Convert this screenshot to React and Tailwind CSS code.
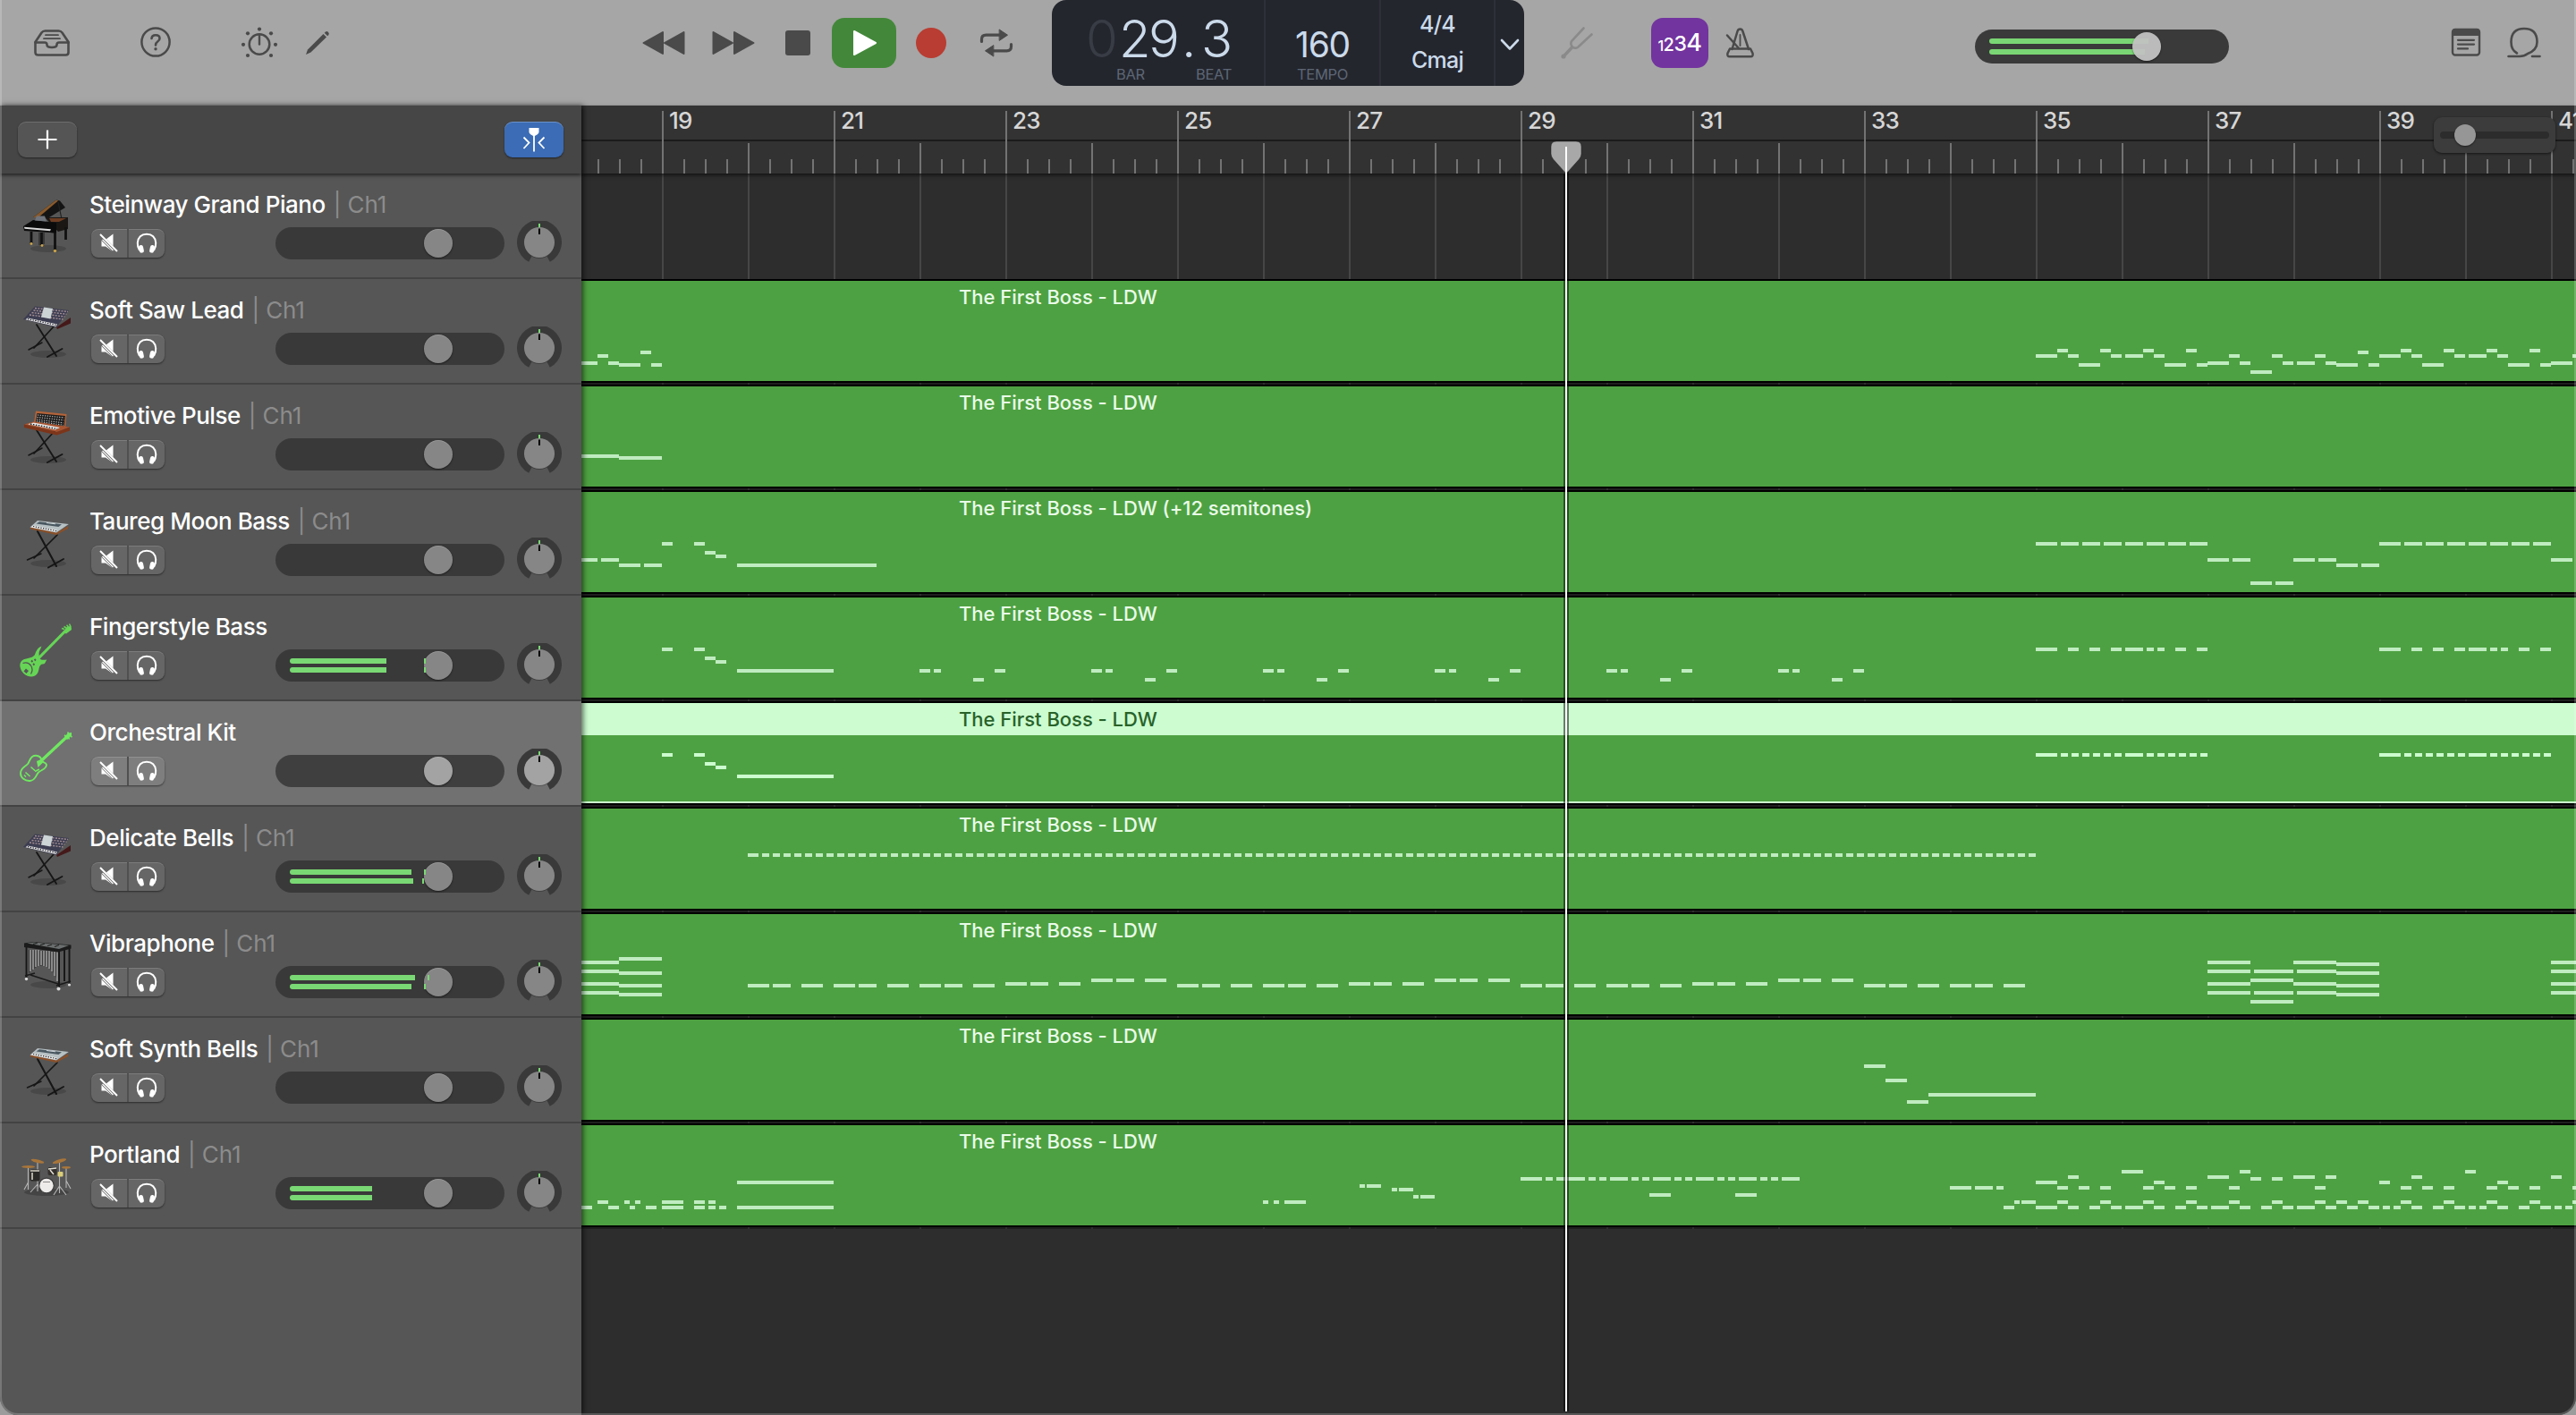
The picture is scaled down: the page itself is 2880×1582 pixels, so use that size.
import React from "react";

/* ---------- toolbar icons ---------- */

const INK = "#4a4a4a";

const LibraryIcon = () => (
  <svg width="40" height="32" viewBox="0 0 40 32" className="ml-[38px] shrink-0" fill="none" stroke={INK} strokeWidth="2.6" strokeLinejoin="round" strokeLinecap="round">
    <path d="M1.5 15 L8.5 4.5 Q10 2.5 12.500 2.500 H27.500 Q30 2.500 31.500 4.500 L38.500 15 V26.500 Q38.500 29.500 35.500 29.500 H4.500 Q1.500 29.500 1.500 26.500 Z" />
    <path d="M1.500 15.500 H12 Q14.500 15.500 14.500 18 Q14.500 21 20 21 Q25.500 21 25.500 18 Q25.500 15.500 28 15.500 H38.500" />
    <path d="M13 7.200 H27 M11 11.200 H29" strokeWidth="1.800" />
  </svg>
);

const HelpIcon = () => (
  <svg width="34" height="34" viewBox="0 0 34 34" className="mb-[2px] ml-[79px] shrink-0" fill="none" stroke={INK}>
    <circle cx="17" cy="17" r="15.600" strokeWidth="2.500" />
    <path d="M12.500 13 Q12.800 9.300 17 9.300 Q21.500 9.300 21.500 13 Q21.500 15 19.200 16.500 Q17 18 17 20.500" strokeWidth="2.600" strokeLinecap="round" />
    <circle cx="17" cy="24.800" r="1.700" fill={INK} stroke="none" />
  </svg>
);

const DialIcon = () => (
  <svg width="42" height="36" viewBox="0 0 42 36" className="ml-[78px] shrink-0" fill="none" stroke={INK}>
    <circle cx="21" cy="19.500" r="11.300" strokeWidth="2.500" />
    <path d="M21 10 V19.500" strokeWidth="2.400" strokeLinecap="round" />
    <g fill={INK} stroke="none">
      <circle cx="21" cy="2.600" r="2.100" />
      <circle cx="8" cy="7.300" r="2.100" />
      <circle cx="34" cy="7.300" r="2.100" />
      <circle cx="3" cy="19.800" r="2.100" />
      <circle cx="39" cy="19.800" r="2.100" />
      <circle cx="8" cy="32" r="2.100" />
      <circle cx="34" cy="32" r="2.100" />
    </g>
  </svg>
);

const PencilIcon = () => (
  <svg width="28" height="28" viewBox="0 0 28 28" className="ml-[30px] shrink-0" fill={INK}>
    <path d="M20.500 4 L24 7.500 L6.500 24.500 L1 27 L3 21.500 Z" />
    <path d="M21.700 2.800 L23.200 1.400 Q24.500 0.400 26 1.900 Q27.500 3.500 26.400 4.900 L25.200 6.200 Z" />
  </svg>
);

const SeekIcon = ({ forward }) => (
  <svg width="48" height="28" viewBox="0 0 48 28" className={forward ? "ml-[30px] shrink-0 -scale-x-100" : "ml-[349px] shrink-0"} fill={INK} stroke={INK} strokeWidth="2" strokeLinejoin="round">
    <path d="M23 2 V26 L1.500 14 Z" />
    <path d="M46.500 2 V26 L25 14 Z" />
  </svg>
);

const CycleIcon = () => (
  <svg width="38" height="32" viewBox="0 0 38 32" className="ml-[37px] shrink-0" fill="none" stroke={INK} strokeWidth="3.200" strokeLinecap="round">
    <path d="M2.500 14.500 V12 Q2.500 7.200 7.500 7.200 H24" />
    <path d="M35.500 17.500 V20 Q35.500 24.800 30.500 24.800 H14" />
    <path d="M22.500 1.200 L31.500 7.200 L22.500 13.200 Z M15.500 18.800 L6.500 24.800 L15.500 30.800 Z" fill={INK} stroke={INK} strokeWidth="1" strokeLinejoin="round" />
  </svg>
);

const TuningForkIcon = () => (
  <svg width="38" height="38" viewBox="0 0 38 38" className="ml-[40px] shrink-0" fill="none" stroke="#8a8a8a" strokeWidth="3" strokeLinecap="round">
    <path d="M26.500 2.500 L13.500 16.500 Q11.500 19 13 22 Q14.800 25.500 18.500 24.500 Q20 24.200 21 23 L35.500 9.500" strokeWidth="2.600" />
    <path d="M13.500 24 L5 33" strokeWidth="3.400" />
    <circle cx="4" cy="34" r="2.600" fill="#8a8a8a" stroke="none" />
  </svg>
);

const MetronomeIcon = () => (
  <svg width="34" height="34" viewBox="0 0 34 34" className="ml-[18px] shrink-0" fill="none" stroke={INK} strokeWidth="2.500" strokeLinejoin="round" strokeLinecap="round">
    <path d="M8.500 24 L14.500 4 Q15.200 1.500 17.500 1.500 Q19.700 1.500 20.400 4 L27 24" />
    <path d="M6 23.500 H29 L31.500 28.500 Q32.500 32.300 29 32.300 H6 Q2.500 32.300 3.500 28.500 Z" />
    <path d="M17.500 8 V20" strokeWidth="1.800" />
    <path d="M3 8.500 L16 23" />
  </svg>
);

const NotepadIcon = () => (
  <svg width="34" height="32" viewBox="0 0 34 32" className="mb-[2px] ml-[248px] shrink-0" fill="none" stroke={INK}>
    <rect x="2" y="2" width="30" height="28.500" rx="3" strokeWidth="2.400" />
    <path d="M1.500 9 V4 Q1.500 1 4.500 1 H29.500 Q32.500 1 32.500 4 V9 Z" fill={INK} stroke="none" />
    <path d="M8 13.800 H26 M8 18.600 H26 M8 23.400 H19" strokeWidth="2.200" strokeLinecap="round" />
  </svg>
);

const LoopBrowserIcon = () => (
  <svg width="40" height="36" viewBox="0 0 40 36" className="ml-[28px] shrink-0" fill="none" stroke={INK} strokeWidth="2.600" strokeLinecap="round">
    <path d="M2.500 33 H15 Q20 33 24 30 Q34.500 26 34.500 17 Q34.500 2 20 2 Q5.500 2 5.500 17 Q5.500 26 12 29.500" />
    <path d="M29 33 H37.500" />
  </svg>
);

/* ---------- instrument pictures ---------- */

const Shadow = ({ cy = 60 }) => <ellipse cx="32" cy={cy} rx="20" ry="4" fill="#000" opacity="0.160" />;

const Stand = () => (
  <g stroke="#161616" strokeLinecap="round" fill="none">
    <path d="M19 27 L41 62" strokeWidth="1.900" />
    <path d="M39 28 L16 53" strokeWidth="1.700" />
    <path d="M10 55 L25 47" strokeWidth="1.500" />
    <path d="M31 63 L47.500 54" strokeWidth="1.900" />
  </g>
);

const Piano = () => (
  <>
    <Shadow />
    <path d="M15 25 L41 5.500 L45 6.500 L51 14 L33 25 Z" fill="#151414" />
    <path d="M15 25 L41 5.500 L43 6.500 L21 25 Z" fill="#8a5a2c" />
    <path d="M43 8 L47 27" stroke="#222" strokeWidth="1.200" />
    <path d="M28 25 L54 25 L54 38 L43 41 Z" fill="#1a1715" />
    <path d="M33 26 L52 26 L44 30 L35 30 Z" fill="#6d3d22" />
    <path d="M4 35 L15 28 L41 31 L41 43 L34 42 L5 40 Z" fill="#0b0b0c" />
    <path d="M19 23.500 L28 23.500 L30 29.500 L17 28.500 Z" fill="#70747c" />
    <path d="M5 35.800 L35 38.300 L34 40.300 L5.500 37.800 Z" fill="#d9d9d9" />
    <path d="M13 41 V54 M24.500 42 V56 M39.500 42 V62 M51.500 36 V50" stroke="#111" strokeWidth="2.800" />
    <path d="M22 42 V56 M27 42 V55" stroke="#1c1c1c" strokeWidth="1" />
    <g fill="#c9a24a">
      <circle cx="13" cy="54.500" r="1.400" />
      <circle cx="25" cy="56.500" r="1.400" />
      <circle cx="39.500" cy="62.500" r="1.700" />
    </g>
  </>
);

const Workstation = () => (
  <>
    <Shadow />
    <Stand />
    <path d="M41 30 L57 19 L57 25.500 L42 32 Z" fill="#45191a" />
    <path d="M17 6.500 L55 11 L41 30 L4 21 Z" fill="#3d3d52" />
    <path d="M17 8.500 L54 12.500 M15.500 11 L52.500 15.200 M13.500 13.500 L50.500 18 M11 16 L48.500 21" stroke="#a38f92" strokeWidth="1.400" strokeDasharray="2 1.300" />
    <path d="M27 7.500 L37 9 L34.500 20.500 L24 18.500 Z" fill="#ccd4d6" />
    <path d="M9 19.500 L42 26.500 L40.500 29 L6.500 21.300 Z" fill="#eaeaea" />
    <path d="M9 20.600 L41 27.500" stroke="#1b1b28" strokeWidth="1.200" strokeDasharray="1.400 1.400" />
  </>
);

const ModularSynth = () => (
  <>
    <Shadow />
    <Stand />
    <path d="M18 5.500 L52.500 9 L51 24 L16 18.500 Z" fill="#b4643a" />
    <path d="M19.500 8 L51 11 L49.700 22.500 L17.800 17.500 Z" fill="#1d1d1d" />
    <path d="M20 10 L50 13 M19.500 12.500 L49.500 15.800 M19 15 L49 18.800 M19 17 L49 21.300" stroke="#c2c2c2" strokeWidth="1.200" strokeDasharray="1.200 1.500" />
    <path d="M5 20.500 L15 17.500 L56 23.500 L41.500 29 Z" fill="#a85430" />
    <path d="M9 20.300 L15.500 18.600 L45 24 L40 26.600 Z" fill="#e8e8e8" />
    <path d="M12 20 L42 25.500" stroke="#151515" strokeWidth="1.300" strokeDasharray="1.500 1.500" />
    <path d="M5 20.500 L41.500 29 L56 23.500 V27.500 L41.500 32.500 L5 24 Z" fill="#7d3519" />
  </>
);

const Keyboard = () => (
  <>
    <Shadow cy={58} />
    <g stroke="#161616" strokeLinecap="round">
      <path d="M20 22 L41 61" strokeWidth="2.100" />
      <path d="M42 26 L16 52" strokeWidth="1.700" />
      <path d="M8.500 54 L24 47" strokeWidth="1.500" />
      <path d="M32 62.500 L49 53" strokeWidth="2" />
    </g>
    <path d="M12 17 L41 23.500 L54.500 16 L54 19 L41 26 L12 19.500 Z" fill="#8a5029" />
    <path d="M20 10 L54.800 14 L41 23.500 L11.500 17.500 Z" fill="#b7c0c3" />
    <path d="M22 11.200 L47 14.300 L43.500 17 L18.500 13.500 Z" fill="#4a5861" />
    <path d="M30 12.500 L40 13.800" stroke="#cfd8dc" strokeWidth="1" />
    <path d="M15.500 15.500 L42 20.500 L39.500 22.500 L13 17.500 Z" fill="#f0f0f0" />
    <path d="M15 16.500 L41 21.500" stroke="#222" strokeWidth="1.200" strokeDasharray="1.400 1.400" />
  </>
);

const BassGuitar = () => (
  <>
    <path d="M21 46 L51 15.500" stroke="#66d556" strokeWidth="3.200" />
    <path d="M48 17 L53 10.500 L57.500 10 L58 14 L52 18.500 Z" fill="#66d556" />
    <path d="M47 12.500 l3 1 M49.500 10.500 l2.500 1.500 M52.500 8.800 l2 2 M55.500 7.500 l1.500 3" stroke="#66d556" strokeWidth="1.500" />
    <path d="M24.500 32.500 C20 34 18.500 38 17.300 41 C15.500 46 9 45.500 4.500 47.300 C1 49 0 52 0.500 55.500 C1.500 62 7.500 66.500 13 66.500 C18.500 66.500 20.500 62.500 21.300 59 C22 55 23 52.500 26 52.500 C29 52.500 28.500 49.500 30.500 47.500 C27.500 47.500 24.500 48.500 22.500 46.500 C21 44 22 42.500 21.500 40.500 C21.500 37.500 23.500 36 24.500 32.500 Z" fill="#66d556" />
    <path d="M3.500 51.500 Q9 49.500 12.500 54 Q15.500 58.500 12.500 63.500" stroke="#565656" strokeWidth="1.300" fill="none" />
    <path d="M13 48.500 l1.500 1.500 M16.500 47 l1.500 1.500 M15 52 l1.500 1.500" stroke="#565656" strokeWidth="1.800" />
    <path d="M7 57.500 l3 2.500 -2.500 3 -3 -2.500 Z" fill="#565656" />
  </>
);

const ViolinBass = () => (
  <>
    <path d="M22 44.500 L52 16.500" stroke="#70e860" strokeWidth="3.200" />
    <path d="M50 16 L54 11.500 L58 11 L58 14.500 L53 19 Z" fill="#70e860" />
    <path d="M50 14 l2.500 1.500 M53.500 10.500 l1.500 2 M55.500 18.500 l-1 -2 M58.500 16 l-1.500 -1" stroke="#70e860" strokeWidth="1.600" />
    <path d="M16 37 C12 38 11.500 42 9.500 45.500 C7 49 1 50 1 56.500 C1 61.500 6 65.500 11.500 65 C18 64.500 18 58.500 21 55.500 C24 52.500 30 52 30 47 C29.500 44.500 27.500 45 25.500 43.500 C24 38.500 20.500 36 16 37 Z" fill="none" stroke="#70e860" strokeWidth="1.900" />
    <path d="M19 43 L24 41 L27 43.500 L20.500 50 Z" fill="#70e860" />
    <path d="M12.500 49.500 l4.500 4 M6.500 55.500 l5 4.500 M5 58.500 l2 2 M17 54.500 l5 -2.500" stroke="#70e860" strokeWidth="1.600" />
  </>
);

const Vibes = () => (
  <>
    <Shadow cy={57} />
    <path d="M10 18 L43 20 V55 Q36 32 20 36 L10 44 Z" fill="#3c3c3c" />
    <path d="M12 18 V42 M15 18 V40 M18 18 V37 M21 18 V36 M24 19 V35 M27 19 V36 M30 19 V37 M33 19 V39 M36 20 V42 M39 20 V47 M42 20 V53" stroke="#a2a2a2" strokeWidth="1.500" />
    <path d="M7.500 15 V49 M44 20 V60 M55.500 15 V57 M50 17 V53" stroke="#161616" strokeWidth="1.900" />
    <path d="M6 47 L17 44 M41 58 L57 53 M12 46 L43 56" stroke="#1a1a1a" strokeWidth="1.500" />
    <path d="M5 10.500 L15 9 L57.500 12.500 L57.500 16.500 L43 20.500 L5 15 Z" fill="#1b1b1b" />
    <path d="M8 10.500 L16 9.600 L55 13 L44 17 Z" fill="#6c6f6f" />
    <path d="M20 10 l-5 1.500 M28 11 l-5 1.500 M36 12 l-5 1.500 M44 12.500 l-5 2" stroke="#222" strokeWidth="1.300" />
    <g fill="#d8d8d8">
      <circle cx="7.500" cy="50.500" r="1.700" />
      <circle cx="43.500" cy="61.500" r="2" />
      <circle cx="55.500" cy="57" r="1.600" />
    </g>
  </>
);

const DrumKit = () => (
  <>
    <ellipse cx="30" cy="53" rx="25" ry="4" fill="#000" opacity="0.200" />
    <path d="M20 18 V52 M44.500 18 V54 M9.500 24 V50 M52 25 V48 M20 44 L12 53 M20 44 L26 53 M44.500 46 L38 56 M44.500 46 L52 56 M9.500 42 L5 50 M52 40 L57 49" stroke="#b7b7b7" strokeWidth="1.100" />
    <rect x="11.500" y="27.500" width="11" height="13" rx="2" fill="#2b2927" />
    <path d="M12 29 H22 M14 31 V39" stroke="#d5d0c4" strokeWidth="1.600" />
    <rect x="31.500" y="25" width="10" height="9" rx="2" fill="#33302d" />
    <path d="M32 27 L41 26 M34 28 L38 33" stroke="#e4e0d5" strokeWidth="1.500" />
    <rect x="42.500" y="30" width="6" height="5.500" rx="1" fill="#d9cd7a" />
    <circle cx="30" cy="45.300" r="8.800" fill="#3a3a3a" />
    <circle cx="30" cy="45.500" r="7.700" fill="#eeecea" />
    <path d="M26 41.500 H34" stroke="#8b8b8b" strokeWidth="1" />
    <g fill="#a9763a">
      <ellipse cx="9.600" cy="24.500" rx="7.500" ry="1.500" />
      <ellipse cx="20" cy="18.200" rx="7.500" ry="1.800" transform="rotate(14 20 18.200)" />
      <ellipse cx="44.500" cy="18.200" rx="8" ry="1.900" transform="rotate(-16 44.500 18.200)" />
      <ellipse cx="52" cy="25.300" rx="5" ry="1.400" />
    </g>
  </>
);

/* ---------- note data: [x, y, width] in arrange-area pixels ---------- */

const at = (y, w, ...xs) => xs.map((x) => [x, y, w]);
const shift = (notes, dx) => notes.map(([x, y, w]) => [x + dx, y, w]);

const sawPhrase = [
  [2276, 84, 24], [2300, 78, 12], [2312, 84, 12], [2324, 94, 24], [2348, 78, 12], [2360, 84, 12],
  [2376, 84, 20], [2396, 78, 12], [2408, 84, 12], [2420, 94, 24], [2444, 78, 12], [2456, 94, 12],
];
const sawNotes = [
  [650, 92, 18], [668, 84, 12], [680, 92, 12], [692, 94, 24], [716, 80, 12], [728, 94, 12],
  ...sawPhrase,
  [2468, 92, 24], [2492, 84, 12], [2504, 92, 12], [2516, 102, 24], [2540, 84, 12], [2552, 92, 12],
  [2568, 92, 20], [2588, 84, 12], [2600, 92, 12], [2612, 94, 24], [2636, 80, 12], [2648, 94, 12],
  ...shift(sawPhrase, 384),
  [2852, 92, 24], [2876, 84, 4],
];

const pulseNotes = [[650, 78, 42], [692, 80, 48]];

const moonPhrase = [[2276, 58, 24], ...at(58, 20, 2304, 2328, 2352, 2376, 2400, 2424, 2448)];
const moonNotes = [
  [650, 76, 18], [672, 76, 20], [692, 82, 24], [720, 82, 20],
  [740, 58, 12], [776, 58, 12], [788, 68, 12], [800, 72, 12], [824, 82, 156],
  ...moonPhrase,
  [2468, 76, 24], [2496, 76, 20], [2516, 102, 24], [2544, 102, 20],
  [2564, 76, 24], [2592, 76, 20], [2612, 82, 24], [2640, 82, 20],
  ...shift(moonPhrase, 384),
  [2852, 76, 24],
];

const bassIntro = [[740, 58, 12], [776, 58, 12], [788, 68, 12], [800, 72, 12], [824, 82, 108]];
const bassPhrase = [[2276, 58, 24], ...at(58, 12, 2312, 2336, 2360), [2376, 58, 20], ...at(58, 8, 2400, 2412), ...at(58, 12, 2432, 2456)];
const bassNotes = [
  ...bassIntro,
  ...[1028, 1220, 1412, 1604, 1796, 1988].flatMap((x) => [[x, 82, 12], [x + 16, 82, 8], [x + 60, 92, 12], [x + 84, 82, 12]]),
  ...bassPhrase,
  ...shift(bassPhrase, 384),
];

const kitPhrase = [
  [2276, 58, 24], ...at(58, 8, 2304, 2316, 2328, 2340, 2352, 2364),
  [2376, 58, 20], ...at(58, 8, 2400, 2412, 2424, 2436, 2448, 2460),
];
const kitNotes = [...bassIntro, ...kitPhrase, ...shift(kitPhrase, 384)];

const bellNotes = [[836, 52, 12], ...Array.from({ length: 119 }, (_, i) => [852 + i * 12, 52, 8])];

const vibeNotes = [
  ...[54, 64, 78, 88].map((y) => [650, y, 42]),
  ...[50, 66, 80, 90].map((y) => [692, y, 48]),
  ...[80, 80, 80, 78, 74, 80, 80, 78, 74, 80, 80, 78, 74, 80, 80].flatMap((y, i) => {
    const x = 836 + i * 96;
    return [[x, y, 24], [x + 28, y, 20], [x + 60, y, 24]];
  }),
  ...[54, 64, 78, 88].map((y) => [2468, y, 48]),
  [2520, 64, 44], [2516, 74, 48], [2520, 88, 44], [2516, 98, 48],
  [2564, 54, 48], [2568, 64, 44], [2564, 78, 48], [2568, 88, 44],
  ...[56, 66, 80, 90].map((y) => [2612, y, 48]),
  ...[54, 64, 78, 88].map((y) => [2852, y, 28]),
];

const synthBellNotes = [[2084, 52, 24], [2108, 68, 24], [2132, 92, 24], [2156, 84, 120]];

const drumNotes = [
  ...at(92, 12, 650, 680, 722, 776), ...at(86, 12, 668, 776), ...at(86, 6, 698, 710), [704, 92, 6],
  [740, 86, 24], [740, 92, 24], [792, 86, 8], [792, 92, 8], [804, 92, 8], [824, 64, 108], [824, 92, 108],
  ...at(86, 6, 1412, 1424), [1436, 86, 24],
  [1520, 68, 6], [1528, 68, 16], [1556, 72, 6], [1564, 72, 16], [1580, 80, 6], [1588, 80, 16],
  [1700, 60, 24], [1740, 60, 32], ...at(60, 20, 1800, 1848, 1896, 1944, 1992),
  ...at(60, 8, 1728, 1776, 1788, 1824, 1836, 1872, 1884, 1920, 1932, 1968, 1980),
  [1844, 78, 24], [1940, 78, 24],
  [2180, 70, 24], [2208, 70, 20], [2232, 70, 8], [2240, 92, 12], [2252, 86, 6], [2260, 86, 16],
  [2276, 64, 24], ...at(64, 12, 2408, 2660, 2792),
  ...at(58, 12, 2312, 2600, 2696, 2852), ...at(58, 24, 2468, 2564),
  [2372, 52, 24], ...at(52, 12, 2504, 2756), ...at(60, 12, 2516, 2540),
  ...at(70, 12, 2300, 2324, 2348, 2396, 2420, 2444, 2492, 2588, 2684, 2708, 2732, 2780, 2804, 2828, 2876),
  ...at(86, 12, 2300, 2348, 2396, 2444, 2492, 2540, 2588, 2612, 2636, 2684, 2732, 2780, 2828, 2876),
  ...at(92, 12, 2312, 2336, 2360, 2408, 2432, 2456, 2504, 2528, 2552, 2600, 2624, 2648, 2696, 2720, 2744, 2792, 2816, 2840),
  [2276, 92, 24], ...at(92, 20, 2376, 2472, 2568), ...at(92, 8, 2664, 2676, 2760, 2772, 2856, 2868),
];

const REGION = "The First Boss - LDW";

const tracks = [
  { name: "Steinway Grand Piano", ch: true, Icon: Piano },
  { name: "Soft Saw Lead", ch: true, Icon: Workstation, region: REGION, notes: sawNotes },
  { name: "Emotive Pulse", ch: true, Icon: ModularSynth, region: REGION, notes: pulseNotes },
  { name: "Taureg Moon Bass", ch: true, Icon: Keyboard, region: REGION + " (+12 semitones)", notes: moonNotes },
  { name: "Fingerstyle Bass", Icon: BassGuitar, region: REGION, notes: bassNotes, meter: [108, 108], peaks: [150, 150] },
  { name: "Orchestral Kit", Icon: ViolinBass, region: REGION, notes: kitNotes, selected: true },
  { name: "Delicate Bells", ch: true, Icon: Workstation, region: REGION, notes: bellNotes, meter: [136, 138], peaks: [150, 148] },
  { name: "Vibraphone", ch: true, Icon: Vibes, region: REGION, notes: vibeNotes, meter: [140, 136], peaks: [154, 150] },
  { name: "Soft Synth Bells", ch: true, Icon: Keyboard, region: REGION, notes: synthBellNotes },
  { name: "Portland", ch: true, Icon: DrumKit, region: REGION, notes: drumNotes, meter: [92, 92] },
];

/* ---------- track header ---------- */

const MuteIcon = ({ selected }) => (
  <svg width="24" height="24" viewBox="0 0 24 24" fill="#fff">
    <path d="M3.500 8 H8 L16.500 1.500 V21.500 L8 15.500 H3.500 Z" />
    <path d="M1.500 3.500 L20.500 22.500" stroke={selected ? "#7e7e7e" : "#666666"} strokeWidth="5" />
    <path d="M2 2 L21 21 " stroke="#fff" strokeWidth="2" />
    <path d="M4.500 8 L16.500 20" stroke="#fff" strokeWidth="1.200" />
  </svg>
);

const SoloIcon = () => (
  <svg width="24" height="24" viewBox="0 0 24 24" fill="none" stroke="#fff">
    <path d="M4 20 Q1.500 16 1.800 11.500 Q2.800 1.800 12 1.800 Q21.200 1.800 22.200 11.500 Q22.500 16 20 20" strokeWidth="2" />
    <rect x="3.400" y="14" width="5" height="8.600" rx="2.400" fill="#fff" stroke="none" transform="rotate(-12 6 18)" />
    <rect x="15.600" y="14" width="5" height="8.600" rx="2.400" fill="#fff" stroke="none" transform="rotate(12 18 18)" />
  </svg>
);

const PanKnob = ({ selected }) => (
  <svg width="50" height="50" viewBox="0 0 50 50" className="ml-[14px] shrink-0">
    <path d="M13.200 45.800 A25 25 0 1 1 36.800 45.800 L33.500 39.500 A17 17 0 1 0 16.500 39.500 Z" fill="#393939" />
    <path d="M25 3 V8" stroke="#79d873" strokeWidth="2" />
    <circle cx="25" cy="25" r="17" fill="#000" opacity="0.250" />
    <circle cx="25" cy="24" r="17" fill={selected ? "#a3a3a3" : "#868686"} />
    <path d="M25 8.500 V15" stroke="#000" strokeWidth="2" />
  </svg>
);

const VolumeSlider = ({ meter, peaks, selected }) => (
  <div className={`relative ml-[124px] h-9 w-64 shrink-0 rounded-full ${selected ? "bg-[#3f3f3f]" : "bg-[#393939]"}`}>
    {meter && (
      <div className="flex flex-col gap-1 pt-[10px] pl-4">
        {meter.map((w, i) => (
          <div key={i} className="h-1.5 rounded-l-[3px] bg-[#79d873]" style={{ width: w }} />
        ))}
      </div>
    )}
    <div className={`absolute top-[2px] left-[166px] size-8 rounded-full shadow-[0_1px_2px_rgba(0,0,0,0.5),inset_0_1px_0_rgba(255,255,255,0.15)] ${selected ? "bg-[#a3a3a3]" : "bg-[#868686]"}`} />
    {peaks && (
      <div className="absolute top-[10px] left-4 flex flex-col gap-1">
        {peaks.map((x, i) => (
          <div key={i} className="h-1.5 w-[2px] bg-[#79d873]" style={{ marginLeft: x }} />
        ))}
      </div>
    )}
  </div>
);

const TrackHeader = ({ track }) => {
  const { name, ch, Icon, selected } = track;
  return (
    <div className={`flex h-[118px] shrink-0 border-b-2 border-[#434343] ${selected ? "bg-[#717171]" : "bg-[#565656]"}`}>
      <svg width="60" height="70" viewBox="0 0 60 70" className="mt-6 ml-[22px] shrink-0">
        <Icon />
      </svg>
      <div className="ml-[18px] pt-[19px]">
        <div className="h-8 text-[26px] leading-8 font-medium tracking-[-0.45px] whitespace-nowrap text-white">
          {name}
          {ch && <span className="ml-[9px] font-normal tracking-[-0.1px] text-[#8c8c8c]">| Ch1</span>}
        </div>
        <div className="mt-[2px] ml-[2px] flex h-[50px] items-center">
          <div className={`flex h-8 w-[82px] shrink-0 rounded-[8px] shadow-[0_1px_2px_rgba(0,0,0,0.5),inset_0_1px_0_rgba(255,255,255,0.15)] ${selected ? "bg-[#7e7e7e]" : "bg-[#666666]"}`}>
            <div className="flex w-[42px] items-center justify-center border-r-2 border-[#505050]"><MuteIcon selected={selected} /></div>
            <div className="flex w-10 items-center justify-center"><SoloIcon /></div>
          </div>
          <VolumeSlider {...track} />
          <PanKnob selected={selected} />
        </div>
      </div>
    </div>
  );
};

/* ---------- arrange area ---------- */

const Region = ({ region, notes, selected }) => (
  <div className="relative h-[116px] overflow-hidden border-y-2 border-black bg-[#4ea142]">
    <div className={`h-9 pt-[6px] pl-[422px] text-[22px] leading-6 font-medium tracking-[-0.02px] whitespace-nowrap ${selected ? "bg-[#ccfccf] text-[#28622a]" : "text-[#e9fbe8]"}`}>{region}</div>
    <svg width="2230" height="112" viewBox="650 2 2230 112" className="absolute top-0 left-0" fill={selected ? "#ccfccf" : "#c0ecc1"} shapeRendering="crispEdges">
      {notes.map(([x, y, w], i) => (
        <rect key={i} x={x} y={y} width={w} height="4" />
      ))}
      {selected && <rect x="650" y="112" width="2230" height="2" />}
    </svg>
  </div>
);

const Ticks = ({ first }) =>
  (first ? [1, 2, 3] : [0, 1, 2, 3, 4, 5, 6, 7]).map((i) => (
    <div key={i} className="flex h-full w-6 shrink-0 items-end">
      {i > 0 && <div className={`w-[2px] bg-[#737373] ${i === 4 ? "h-[34px]" : "h-4"}`} />}
    </div>
  ));

const Ruler = () => (
  <div className="relative flex h-[76px] shrink-0 overflow-hidden bg-[linear-gradient(to_bottom,#333333_38px,#1b1b1b_38px,#1b1b1b_40px,#323232_40px)] pt-1.5">
    <div className="flex w-[90px] shrink-0 items-end pl-[18px]"><Ticks first /></div>
    {[19, 21, 23, 25, 27, 29, 31, 33, 35, 37, 39, 41].map((n) => (
      <div key={n} className="flex w-48 shrink-0 flex-col justify-between border-l-2 border-[#737373]">
        <div className="pl-[6px] text-[26px] leading-[22px] font-medium tracking-[-0.7px] text-[#d6d6d6]">{n}</div>
        <div className="-ml-[2px] flex h-[34px]"><Ticks /></div>
      </div>
    ))}
    <div className="absolute top-[13px] left-[2071px] flex h-10 w-[136px] items-center rounded-[9px] bg-[#3c3c3c] px-[7px] shadow-[0_1px_3px_rgba(0,0,0,0.6)]">
      <div className="flex h-2 w-full items-center rounded-full bg-[#2c2c2c] pl-4">
        <div className="size-6 shrink-0 rounded-full bg-[#969696] shadow-[0_1px_2px_rgba(0,0,0,0.5)]" />
      </div>
    </div>
  </div>
);

const Playhead = () => (
  <svg width="38" height="1424" viewBox="0 0 38 1424" className="absolute top-[38px] left-[1082px]">
    <path d="M17 36 V1422 M21 36 V1422" stroke="#000" strokeOpacity="0.500" strokeWidth="2" />
    <path d="M8 2 H30 Q36 2 36 8 V16 Q36 19 33.500 22 L21 36 Q19 38 17 36 L4.500 22 Q2 19 2 16 V8 Q2 2 8 2 Z" fill="#a8a8a8" stroke="#222" strokeOpacity="0.500" strokeWidth="1" />
    <path d="M19 8 V1422" stroke="#fff" strokeWidth="2" />
  </svg>
);

/* ---------- display ---------- */

const Display = () => (
  <div className="ml-[43px] flex h-24 w-[528px] shrink-0 rounded-[16px] bg-[#24262e] text-[#cbdaea]">
    <div className="flex w-[239px] flex-col border-r-2 border-[#2d3038] pt-[12px] pl-[38px]">
      <div className="flex h-[62px] items-center text-[58px] leading-[62px] font-light">
        <span className="w-[37px] text-[#383c45]">0</span>
        <span className="w-[70px] tracking-[-2.5px]">29</span>
        <span className="w-[22px]">.</span>
        <span>3</span>
      </div>
      <div className="flex pl-[34px] text-[16.5px] leading-[18px] tracking-[-0.3px] text-[#5d6675]">
        <span className="w-[89px]">BAR</span>
        <span>BEAT</span>
      </div>
    </div>
    <div className="flex w-[129px] flex-col items-center border-r-2 border-[#2d3038] pt-[26px]">
      <div className="h-12 text-[39px] leading-[48px] tracking-[-1.2px]">160</div>
      <div className="text-[16.5px] leading-[18px] tracking-[-0.3px] text-[#5d6675]">TEMPO</div>
    </div>
    <div className="flex w-[128px] flex-col items-center gap-2 border-r-2 border-[#2d3038] pt-[11px] text-[25px] leading-8 font-medium tracking-[-0.7px]">
      <div>4/4</div>
      <div>Cmaj</div>
    </div>
    <div className="flex flex-1 items-center justify-center pt-1">
      <svg width="22" height="14" viewBox="0 0 22 14" fill="none" stroke="#cbdaea" strokeWidth="2.600" strokeLinecap="round" strokeLinejoin="round">
        <path d="M2 2 L11 11.500 L20 2" />
      </svg>
    </div>
  </div>
);

const Toolbar = () => (
  <div className="h-[118px] shrink-0 bg-[#a6a6a6]">
    <div className="flex h-24 items-center">
      <LibraryIcon />
      <HelpIcon />
      <DialIcon />
      <PencilIcon />
      <SeekIcon />
      <SeekIcon forward />
      <div className="ml-[34px] size-7 shrink-0 rounded-[3px] bg-[#4a4a4a]" />
      <div className="ml-6 flex h-14 w-[72px] shrink-0 items-center justify-center rounded-[14px] bg-[#43883a] pl-[2px]">
        <svg width="28" height="30" viewBox="0 0 28 30" fill="#fff" stroke="#fff" strokeWidth="2" strokeLinejoin="round">
          <path d="M2 2 L26 15 L2 28 Z" />
        </svg>
      </div>
      <div className="ml-[22px] size-[34px] shrink-0 rounded-full bg-[#b93d32]" />
      <CycleIcon />
      <Display />
      <TuningForkIcon />
      <div className="ml-[64px] flex h-14 w-16 shrink-0 items-baseline justify-center rounded-[13px] bg-[#72349e] pt-[10px] leading-9 font-medium tracking-[-0.5px] text-white">
        <span className="text-[16px]">1</span>
        <span className="text-[20px]">2</span>
        <span className="text-[23px]">3</span>
        <span className="text-[27px]">4</span>
      </div>
      <MetronomeIcon />
      <div className="relative mt-2 ml-[246px] h-[38px] w-[284px] shrink-0 rounded-full bg-[#3a3a3a]">
        <div className="flex flex-col gap-1.5 pt-[10px] pl-4">
          <div className="h-1.5 w-[178px] rounded-l-full bg-[#7ad674]" />
          <div className="h-1.5 w-[174px] rounded-l-full bg-[#7ad674]" />
        </div>
        <div className="absolute top-[3px] left-[176px] size-8 rounded-full bg-[#c2c2c2]/95 shadow-[0_1px_2px_rgba(0,0,0,0.5)]" />
      </div>
      <NotepadIcon />
      <LoopBrowserIcon />
    </div>
  </div>
);

export default function App() {
  return (
    <div className="h-[1582px] w-[2880px] overflow-hidden bg-[#9c9c9c] font-['Inter',sans-serif]">
      <div className="relative flex h-full flex-col overflow-hidden rounded-b-[20px]">
        <Toolbar />
        <div className="flex min-h-0 flex-1">
          <div className="relative z-10 flex w-[650px] shrink-0 flex-col bg-[#565656] shadow-[2px_0_6px_rgba(0,0,0,0.6)]">
            <div className="relative z-10 flex h-[76px] shrink-0 items-center justify-between bg-[#464646] pr-5 pl-5 shadow-[0_2px_4px_rgba(0,0,0,0.6)]">
              <div className="flex h-10 w-[66px] items-center justify-center rounded-[9px] bg-[#555555] shadow-[0_1px_2px_rgba(0,0,0,0.5),inset_0_1px_0_rgba(255,255,255,0.15)]">
                <svg width="22" height="22" viewBox="0 0 22 22" stroke="#fff" strokeWidth="2.200">
                  <path d="M11 0.500 V21.500 M0.500 11 H21.500" />
                </svg>
              </div>
              <div className="flex h-10 w-[66px] items-center justify-center rounded-[9px] bg-[#3b6cb5] shadow-[0_1px_2px_rgba(0,0,0,0.5),inset_0_1px_0_rgba(255,255,255,0.25)]">
                <svg width="28" height="28" viewBox="0 0 28 28" fill="none" stroke="#fff" strokeWidth="1.800">
                  <path d="M8.500 1 H19.500 V6 Q19 8 14 10.500 Q9 8 8.500 6 Z" fill="#fff" stroke="none" />
                  <path d="M14 8 V27.500" />
                  <path d="M2.500 11.500 L8.500 17.500 L2.500 24 M25.500 11.500 L19.500 17.500 L25.500 24" />
                </svg>
              </div>
            </div>
            {tracks.map((t) => (
              <TrackHeader key={t.name} track={t} />
            ))}
          </div>
          <div className="relative flex w-[2230px] flex-col bg-[#2d2d2d]">
            <div className="relative z-[1] shadow-[0_2px_4px_rgba(0,0,0,0.6)]"><Ruler /></div>
            <div className="flex flex-col bg-[linear-gradient(90deg,#464646_2px,transparent_2px)] bg-[length:96px_100%] bg-[position:90px_0]">
              {tracks.map((t) =>
                t.region ? (
                  <div key={t.name} className="h-[118px] border-b-2 border-black/30">
                    <Region {...t} />
                  </div>
                ) : (
                  <div key={t.name} className="h-[118px]" />
                )
              )}
            </div>
            <div className="absolute inset-0 z-[2] overflow-hidden"><Playhead /></div>
          </div>
        </div>
        <div className="pointer-events-none absolute inset-0 z-20 rounded-b-[20px] border-x-2 border-b-2 border-white/20" />
      </div>
    </div>
  );
}
